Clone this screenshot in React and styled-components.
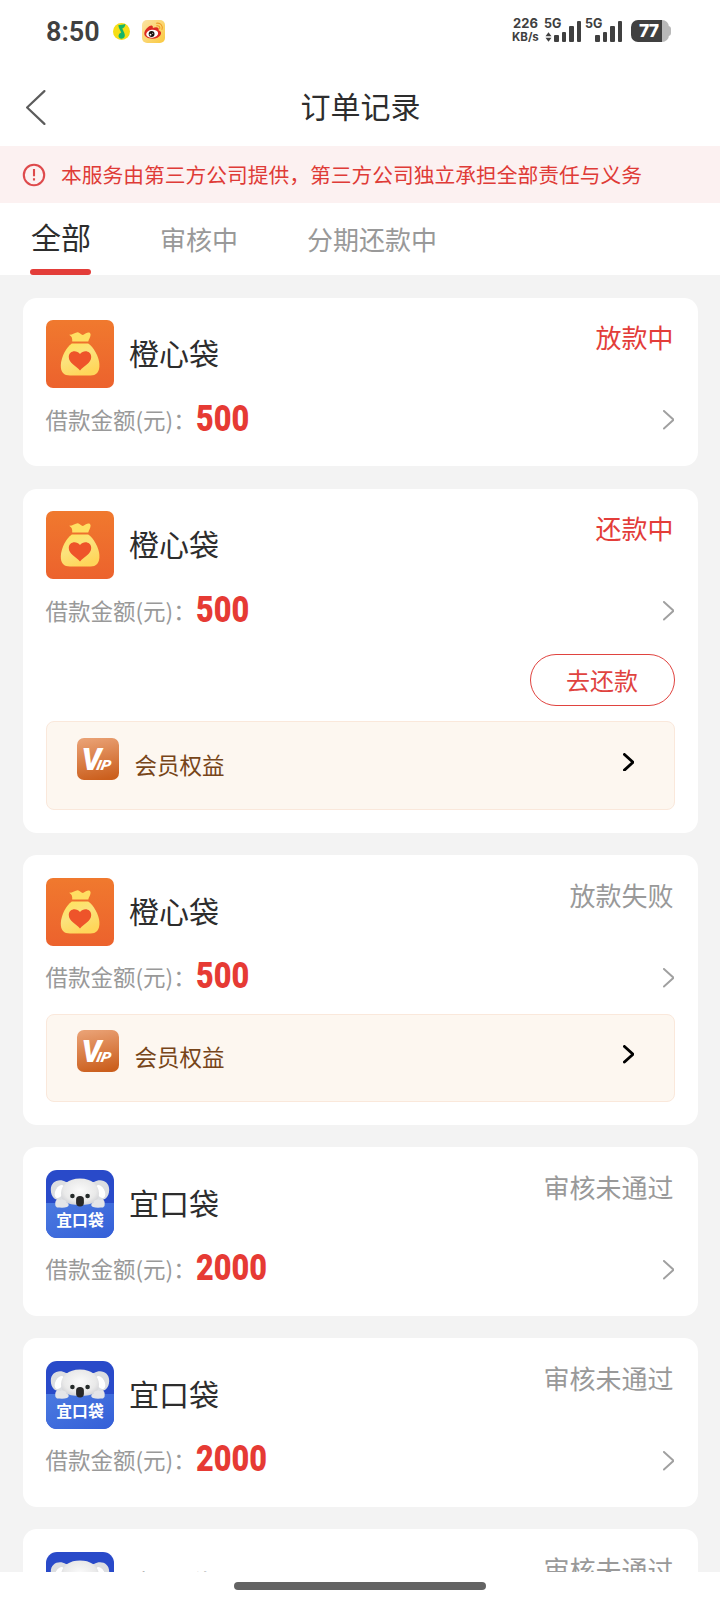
import React from "react";
import styled, { createGlobalStyle } from "styled-components";

const sans = `"Noto Sans CJK SC", "Noto Sans", sans-serif`;

const GlobalStyle = createGlobalStyle`
  * { box-sizing: border-box; }
  body { margin: 0; background: #fff; font-family: ${sans}; color: #2d2d2d; }
`;

const Screen = styled.div`
  width: 720px;
  height: 1600px;
  display: flex;
  flex-direction: column;
  overflow: hidden;
  background: #fff;
`;

const StatusBar = styled.header`
  height: 63px;
  flex: none;
  display: flex;
  align-items: center;
  padding: 0 49px 0 46px;
  color: #404040;
  font-family: Roboto, sans-serif;
`;

const Clock = styled.span`
  width: 67px;
  font-size: 27px;
  font-weight: 600;
  line-height: 32px;
`;

const StatusRight = styled.div`
  margin-left: auto;
  display: flex;
  align-items: flex-end;
  height: 25px;
`;

const NetSpeed = styled.div`
  width: 33px;
  display: flex;
  flex-direction: column;
  font-family: Inter, sans-serif;
  font-weight: 700;
  line-height: 14px;
  white-space: nowrap;
  text-align: left;
`;

const SpeedValue = styled.span`
  font-size: 13px;
  padding-left: 1px;
`;

const SpeedUnit = styled.span`
  font-size: 11.5px;
`;

const Battery = styled.div`
  display: flex;
  align-items: center;
`;

const BatteryBody = styled.div`
  width: 38px;
  height: 22px;
  padding-left: 8px;
  border-radius: 7px;
  background: linear-gradient(90deg, #404040 31px, #b9b9b9 31px);
  color: #fff;
  font: 800 17.5px/22px Inter, sans-serif;
  letter-spacing: -0.8px;
`;

const BatteryTip = styled.div`
  width: 3px;
  height: 10px;
  margin-left: -1px;
  border-radius: 0 3px 3px 0;
  background: #b9b9b9;
`;

const NavBar = styled.nav`
  height: 83px;
  flex: none;
  display: grid;
  grid-template-columns: 100px 1fr 100px;
  align-items: center;
`;

const BackButton = styled.button`
  border: 0;
  padding: 5px 0 0 26px;
  background: none;
  display: flex;
`;

const Title = styled.h1`
  margin: 0 0 0 1px;
  font-size: 30px;
  line-height: 40px;
  font-weight: 400;
  text-align: center;
`;

const Notice = styled.div`
  height: 57px;
  flex: none;
  display: flex;
  align-items: center;
  gap: 15px;
  padding-left: 22px;
  background: #fcf1f1;
  color: #df3b37;
  font-size: 20.75px;
  white-space: nowrap;
`;

const NoticeText = styled.span`
  line-height: 30px;
  padding-bottom: 2px;
`;

const Tabs = styled.div`
  height: 72px;
  flex: none;
  display: flex;
  gap: 69px;
  padding-left: 30px;
`;

const Tab = styled.div`
  display: flex;
  flex-direction: column;
  justify-content: flex-end;
  color: ${(p) => (p.$active ? "#2d2d2d" : "#999")};
  font-size: ${(p) => (p.$active ? 30 : 26)}px;
  line-height: 40px;
  border-bottom: 6px solid transparent;
  padding: 0 0 ${(p) => (p.$active ? 13 : 10)}px 1px;
  margin-right: -1px;
  position: relative;

  &::after {
    content: "";
    display: ${(p) => (p.$active ? "block" : "none")};
    position: absolute;
    left: 0;
    right: 0;
    bottom: -6px;
    height: 6px;
    border-radius: 3px;
    background: #e33d39;
  }
`;

const List = styled.main`
  flex: 1;
  min-height: 0;
  overflow: hidden;
  display: flex;
  flex-direction: column;
  gap: 22.6px;
  padding: 22.5px 22.5px 0 22.5px;
  background: #f3f3f3;
`;

const Card = styled.section`
  flex: none;
  padding: 22.6px 23px;
  border-radius: 14px;
  background: #fff;
`;

const CardHead = styled.div`
  height: 68px;
  display: flex;
  align-items: center;
`;

const ProductName = styled.h2`
  margin: 0 auto 4px 15.5px;
  font-size: 30px;
  line-height: 40px;
  font-weight: 400;
`;

const State = styled.span`
  align-self: flex-start;
  margin: -1px 1px 0 0;
  font-size: 26px;
  line-height: 36px;
  color: ${(p) => (p.$active ? "#e33d39" : "#999")};
`;

const AmountRow = styled.div`
  height: 55.3px;
  padding: 16px 0.5px 7.3px 0;
  display: flex;
  align-items: center;
`;

const AmountLabel = styled.span`
  width: 150px;
  padding-bottom: 3px;
  font-size: 22.5px;
  line-height: 32px;
  color: #999;
  white-space: nowrap;
`;

const Amount = styled.strong`
  margin: 0 auto 3px 0;
  font: 900 36px/32px Roboto, sans-serif;
  color: #e63a34;
  transform: scaleX(0.85);
  transform-origin: left;
`;

const RepayButton = styled.button`
  display: block;
  width: 145px;
  height: 52px;
  margin: 20px 0 15px auto;
  padding: 0;
  border: 1.5px solid #e0433f;
  border-radius: 26px;
  background: #fff;
  color: #e0433f;
  font: 400 24px/46px ${sans};
`;

const MemberBox = styled.div`
  height: 88.5px;
  margin-top: ${(p) => (p.$spaced ? 12.5 : 0)}px;
  display: flex;
  padding: 15.5px 39.5px 0 30px;
  border: 1px solid #fae8db;
  border-radius: 8px;
  background: #fdf7f0;
`;

const MemberText = styled.span`
  margin: 10px auto 0 16px;
  font-size: 22.5px;
  line-height: 32px;
  color: #774519;
`;

const MemberArrow = styled.div`
  padding-top: 14.5px;
`;

const Footer = styled.footer`
  height: 28.5px;
  flex: none;
  display: flex;
  justify-content: center;
  padding-top: 10.5px;
`;

const HomeIndicator = styled.div`
  width: 252px;
  height: 7.5px;
  border-radius: 4px;
  background: #636363;
`;

function Chevron({ w, h, color, stroke, left }) {
  const m = stroke / 2;
  const d = left
    ? `M${w - m} ${m}L${m} ${h / 2}L${w - m} ${h - m}`
    : `M${m} ${m}L${w - m} ${h / 2}L${m} ${h - m}`;
  return (
    <svg width={w} height={h} viewBox={`0 0 ${w} ${h}`} fill="none">
      <path d={d} stroke={color} strokeWidth={stroke} strokeLinecap="round" strokeLinejoin="round" />
    </svg>
  );
}

function MusicIcon() {
  return (
    <svg width="17" height="17" viewBox="0 0 17 17">
      <circle cx="8.5" cy="8.5" r="8.5" fill="#f6de16" />
      <path d="M5.3 2.2C7.6 1.8 9.5 1.7 12.4 .9C12.4 3.6 10.4 5 9.3 5.6L11.3 10C12.8 13.5 10.9 15.8 8.4 15.7C5 15.5 4.8 11.5 7 10.2L8.2 9.6L5.9 4.8Z" fill="#18b568" />
    </svg>
  );
}

const WeiboWrap = styled.div`
  display: flex;
  margin-left: 12px;
`;

function WeiboIcon() {
  return (
    <svg width="23" height="23" viewBox="0 0 23 23">
      <defs>
        <linearGradient id="wb" x2="1" y2="1">
          <stop stopColor="#fbe3a4" />
          <stop offset="1" stopColor="#fac93f" />
        </linearGradient>
      </defs>
      <rect width="23" height="23" rx="5" fill="url(#wb)" />
      <path d="M2.3 13.5C2.3 10 7 5.2 9.7 5.5C11 5.8 11 7 10.8 8C14 6.6 17.5 7 16.6 10.2C22 12 18 18.7 10.5 18.7C6 18.7 2.3 16.8 2.3 13.5Z" fill="#dc2921" />
      <ellipse cx="10.2" cy="13.7" rx="6" ry="4" transform="rotate(-7 10.2 13.7)" fill="#fff" />
      <circle cx="9.6" cy="14" r="2.9" fill="#17110e" />
      <circle cx="8.5" cy="14.7" r=".9" fill="#fff" />
      <circle cx="10.7" cy="13.2" r=".5" fill="#fff" />
      <path d="M14.5 3.2C18.5 2.5 21.3 6 20 9.4M14.8 5.8C17 5.4 18.2 7 17.7 8.7" fill="none" stroke="#ef9b26" strokeWidth="1.1" strokeLinecap="round" />
    </svg>
  );
}

const SpeedArrows = () => (
  <svg width="7" height="10" viewBox="0 0 7 10">
    <path d="M3.5 .2L6.5 4.2H.5ZM3.5 9.8L6.5 5.8H.5Z" fill="#404040" />
  </svg>
);

const SignalBox = styled.div`
  position: relative;
  width: ${(p) => p.$w}px;
  height: 25px;
`;

const SignalLabel = styled.span`
  position: absolute;
  left: ${(p) => p.$x}px;
  top: -2px;
  font: 700 12.5px/13px Inter, sans-serif;
`;

const SignalBars = styled.div`
  position: absolute;
  right: 0;
  bottom: 2px;
  display: flex;
  align-items: flex-end;
  gap: 3.3px;
`;

const Bar = styled.i`
  width: 4.2px;
  height: ${(p) => p.$h}px;
  border-radius: 1px;
  background: #404040;
`;

const ArrowSlot = styled.div`
  position: absolute;
  left: 0;
  bottom: 2px;
  display: flex;
`;

const BatterySlot = styled.div`
  margin-left: 9px;
  padding-bottom: 2px;
`;

function Signal({ width, labelX, arrows }) {
  return (
    <SignalBox $w={width}>
      <SignalLabel $x={labelX}>5G</SignalLabel>
      {arrows && <ArrowSlot><SpeedArrows /></ArrowSlot>}
      <SignalBars>
        {[7, 10.5, 16, 21].map((h) => <Bar key={h} $h={h} />)}
      </SignalBars>
    </SignalBox>
  );
}

function AlertIcon() {
  return (
    <svg width="24" height="24" viewBox="0 0 24 24" fill="none" stroke="#de4a4c" strokeWidth="2.1">
      <circle cx="12" cy="12" r="10.2" />
      <path d="M12 6V13.2M12 15.2V17.4" />
    </svg>
  );
}

function PouchIcon() {
  return (
    <svg width="68" height="68" viewBox="0 0 68 68">
      <defs>
        <linearGradient id="pouchBg" x2="0" y2="1">
          <stop stopColor="#f0792e" />
          <stop offset="1" stopColor="#ec622d" />
        </linearGradient>
        <linearGradient id="pouch" x1="0" y1="0" x2=".5" y2="1">
          <stop stopColor="#ffe35a" />
          <stop offset=".5" stopColor="#fbe27c" />
          <stop offset="1" stopColor="#ffd65a" />
        </linearGradient>
      </defs>
      <rect width="68" height="68" rx="7" fill="url(#pouchBg)" />
      <path d="M23.2 14.8C27 14.7 29.5 12 32 12.2C34.5 12.8 35.2 15.5 37.5 14.8C40 12.2 44.5 11.2 44.6 14.5C44.6 17.2 43 18.7 42.3 21.5H26.2C26.6 18 25.5 16.3 23.2 14.8Z" fill="#ffdf62" />
      <path d="M25.8 23.4H42.2C47.5 27 52.8 36 53.4 44C53.8 52.5 50 55.5 44.5 55.5H24C18 55.5 14.5 52.5 14.8 45C15.2 37 20 27.5 25.8 23.4Z" fill="url(#pouch)" />
      <path d="M34 50.5C30 45.5 22.8 43.2 22.8 37C22.8 31 30.2 29.2 34 34C37.8 29.2 45.2 31 45.2 37C45.2 43.2 38 45.5 34 50.5Z" fill="#ee542a" />
    </svg>
  );
}

function KoalaIcon() {
  return (
    <svg width="68" height="68" viewBox="0 0 68 68">
      <defs>
        <linearGradient id="koalaFront" x2="1" y2="1">
          <stop stopColor="#4b7ae0" />
          <stop offset="1" stopColor="#345fd8" />
        </linearGradient>
        <radialGradient id="koalaFace" cy=".45" r=".65">
          <stop stopColor="#fafafa" />
          <stop offset=".65" stopColor="#e9e9e9" />
          <stop offset="1" stopColor="#c9cacf" />
        </radialGradient>
        <clipPath id="koalaClip"><rect width="68" height="68" rx="11" /></clipPath>
      </defs>
      <g clipPath="url(#koalaClip)">
        <rect width="68" height="68" fill="#294ac9" />
        <path d="M0 33H68V68H0Z" fill="url(#koalaFront)" />
        <path d="M20 12C13 8 4.5 11.5 4.8 20C5 27 9 31 17 31H51C59 31 63 27 63.2 20C63.5 11.5 55 8 48 12Z" fill="#dcdee1" />
        <ellipse cx="13.5" cy="21.5" rx="4" ry="7" transform="rotate(28 13.5 21.5)" fill="#fff" />
        <ellipse cx="54.5" cy="21.5" rx="4" ry="7" transform="rotate(-28 54.5 21.5)" fill="#fff" />
        <path d="M34 8.5C46 8.5 52.5 15 53 23C53 31 48 35 34 35C20 35 15 31 15 23C15.5 15 22 8.5 34 8.5Z" fill="url(#koalaFace)" />
        <circle cx="26.4" cy="26" r="2.3" fill="#242a29" />
        <circle cx="41.6" cy="26" r="2.3" fill="#242a29" />
        <rect x="30.1" y="26" width="7.8" height="10.5" rx="3.7" fill="#272727" />
        <path d="M9.5 36C8.5 30 11 28.5 14.5 30C17 29 20 30 20.8 32.5C23 33.5 23.5 36 21 37C18 38 14 37.5 11 37.5ZM58.5 36C59.5 30 57 28.5 53.5 30C51 29 48 30 47.2 32.5C45 33.5 44.5 36 47 37C50 38 54 37.5 57 37.5Z" fill="#e4e5e8" />
        <text x="34" y="56.3" textAnchor="middle" fontSize="15.8" fontWeight="700" fill="#fff" fontFamily='"Noto Sans CJK SC", sans-serif'>宜口袋</text>
      </g>
    </svg>
  );
}

function VipIcon() {
  return (
    <svg width="42" height="42" viewBox="0 0 42 42">
      <defs>
        <linearGradient id="vip" x1=".35" x2=".55" y2="1">
          <stop stopColor="#e9a073" />
          <stop offset="1" stopColor="#cb5f1d" />
        </linearGradient>
      </defs>
      <rect width="42" height="42" rx="7" fill="url(#vip)" />
      <g fill="#fff" fontFamily="Roboto, sans-serif" fontWeight="900" fontStyle="italic">
        <text x="4.5" y="32" fontSize="31">V</text>
        <text transform="translate(18.8 32) skewX(-12) scale(1.1 1)" fontSize="14">IP</text>
      </g>
    </svg>
  );
}

const orders = [
  { name: "橙心袋", amount: 500, state: "放款中", active: true },
  { name: "橙心袋", amount: 500, state: "还款中", active: true, repay: true, member: true },
  { name: "橙心袋", amount: 500, state: "放款失败", member: true },
  { name: "宜口袋", amount: 2000, state: "审核未通过" },
  { name: "宜口袋", amount: 2000, state: "审核未通过" },
  { name: "宜口袋", amount: 2000, state: "审核未通过" },
];

function OrderCard({ order }) {
  return (
    <Card>
      <CardHead>
        {order.name === "橙心袋" ? <PouchIcon /> : <KoalaIcon />}
        <ProductName>{order.name}</ProductName>
        <State $active={order.active}>{order.state}</State>
      </CardHead>
      <AmountRow>
        <AmountLabel>借款金额(元)：</AmountLabel>
        <Amount>{order.amount}</Amount>
        <Chevron w={11.5} h={19.5} color="#a0a0a0" stroke={1.9} />
      </AmountRow>
      {order.repay && <RepayButton>去还款</RepayButton>}
      {order.member && (
        <MemberBox $spaced={!order.repay}>
          <VipIcon />
          <MemberText>会员权益</MemberText>
          <MemberArrow>
            <Chevron w={11.5} h={18.5} color="#000" stroke={2.9} />
          </MemberArrow>
        </MemberBox>
      )}
    </Card>
  );
}

export default function App() {
  return (
    <Screen>
      <GlobalStyle />
      <StatusBar>
        <Clock>8:50</Clock>
        <MusicIcon />
        <WeiboWrap><WeiboIcon /></WeiboWrap>
        <StatusRight>
          <NetSpeed>
            <SpeedValue>226</SpeedValue>
            <SpeedUnit>KB/s</SpeedUnit>
          </NetSpeed>
          <Signal width={36} labelX={-1} arrows />
          <Signal width={41} labelX={4} />
          <BatterySlot>
            <Battery>
              <BatteryBody>77</BatteryBody>
              <BatteryTip />
            </Battery>
          </BatterySlot>
        </StatusRight>
      </StatusBar>
      <NavBar>
        <BackButton aria-label="返回">
          <Chevron w={19.5} h={35} color="#5c5c5c" stroke={2.2} left />
        </BackButton>
        <Title>订单记录</Title>
      </NavBar>
      <Notice>
        <AlertIcon />
        <NoticeText>本服务由第三方公司提供，第三方公司独立承担全部责任与义务</NoticeText>
      </Notice>
      <Tabs>
        <Tab $active>全部</Tab>
        <Tab>审核中</Tab>
        <Tab>分期还款中</Tab>
      </Tabs>
      <List>
        {orders.map((order, i) => <OrderCard key={i} order={order} />)}
      </List>
      <Footer><HomeIndicator /></Footer>
    </Screen>
  );
}
